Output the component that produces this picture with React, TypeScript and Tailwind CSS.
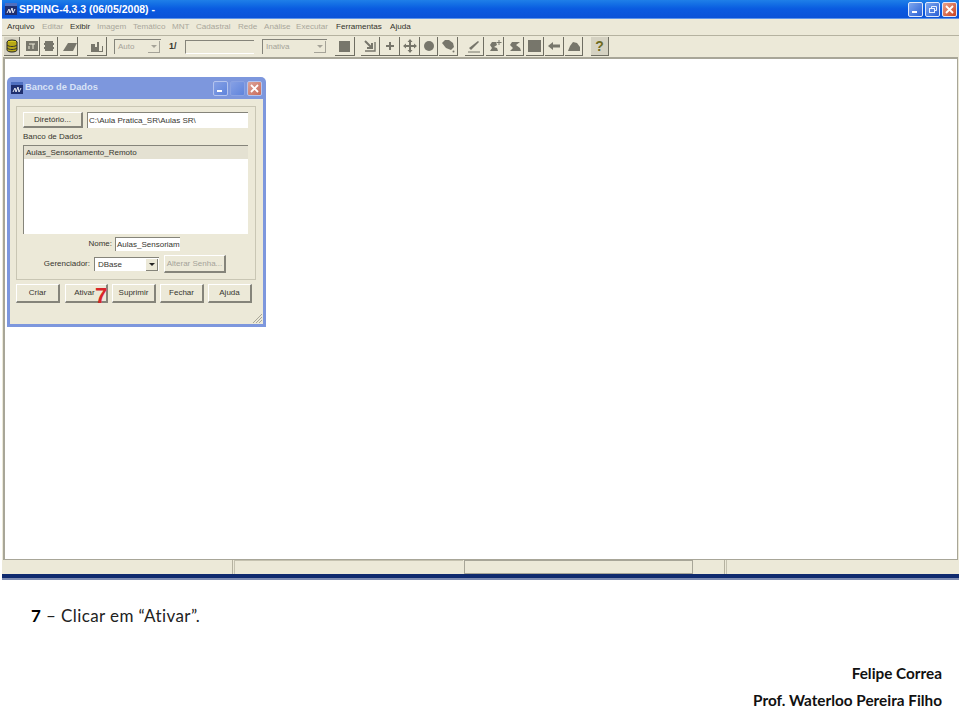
import React from "react";

const ui = "font-['Liberation_Sans',Arial,sans-serif]";
const Ic = ({ children, w = 14 }: { children: React.ReactNode; w?: number }) => (
  <svg width={w} height={14} viewBox="0 0 14 14" className="block">{children}</svg>
);
const G = "#77766b";

const ToolBtn = ({ w, className = "", children }: { w: string; className?: string; children: React.ReactNode }) => (
  <div className={`h-[19px] flex items-center justify-center border-r border-b border-[#6f6e62] ${w} ${className}`}>{children}</div>
);

const Xp = ({ kind, active }: { kind: "min" | "max" | "close"; active: boolean }) => {
  const bg = kind === "close"
    ? active ? "bg-gradient-to-br from-[#e8a08a] to-[#c8401c]" : "bg-gradient-to-br from-[#dba49a] to-[#c96a58]"
    : active ? "bg-gradient-to-br from-[#7ea6ee] to-[#2a5fd4]" : "bg-gradient-to-br from-[#86a0e4] to-[#5f84dc]";
  const bd = active ? "border border-[#dfe8fa]" : kind === "max" ? "border border-[#8aa2e2]" : "border border-[#b4c4ee]";
  return (
    <div className={`w-[15px] h-[15px] rounded-[2px] ${bd} ${bg} flex items-center justify-center`}>
      <svg width="11" height="11" viewBox="0 0 11 11">
        {kind === "min" && <rect x="2" y="7" width="5" height="2" fill="#fff" />}
        {kind === "max" && active && <g fill="none" stroke="#e8f0ff"><rect x="2.5" y="4.5" width="5" height="4" /><path d="M4.5 4V2.500h5v4H8" /></g>}
        {kind === "close" && <path d="M2 2l7 7M9 2l-7 7" stroke="#fff" strokeWidth="1.8" />}
      </svg>
    </div>
  );
};

const SpringIcon = () => (
  <svg width="12" height="12" viewBox="0 0 12 12" className="block">
    <rect width="12" height="12" fill="#1f2f70" />
    <rect x="0" y="0" width="12" height="3" fill="#4f6fc0" />
    <path d="M2 10l2-4 1 4 2-5 1 5 2-4" stroke="#e8ecf6" strokeWidth="1" fill="none" />
  </svg>
);

const DlgButton = ({ w, children, disabled }: { w: string; children: React.ReactNode; disabled?: boolean }) => (
  <div className={`${w} h-full whitespace-nowrap flex items-center justify-center bg-[#ece9d8] border-t border-l border-t-white border-l-white border-r-2 border-b-2 border-r-[#85847a] border-b-[#85847a] ${disabled ? "text-[#a5a398]" : "text-[#37362f]"}`}>{children}</div>
);

const Sunken = ({ className = "", children }: { className?: string; children?: React.ReactNode }) => (
  <div className={`bg-white border-t border-l border-t-[#85847a] border-l-[#85847a] ${className}`}>{children}</div>
);

const Arrow = ({ off }: { off?: boolean }) => (
  <div className={`w-[12px] h-[12px] bg-[#ece9d8] border-r border-b ${off ? "border-[#a5a398]" : "border-[#85847a]"} flex items-center justify-center`}>
    <div className={`w-0 h-0 border-l-[3px] border-r-[3px] border-t-[3px] border-l-transparent border-r-transparent ${off ? "border-t-[#a5a398]" : "border-t-[#222]"}`} />
  </div>
);

export default function App() {
  const menu: [string, boolean, string][] = [
    ["Arquivo", true, "w-[35px]"], ["Editar", false, "w-[28px]"], ["Exibir", true, "w-[27px]"], ["Imagem", false, "w-[36px]"],
    ["Temático", false, "w-[39px]"], ["MNT", false, "w-[24px]"], ["Cadastral", false, "w-[42px]"], ["Rede", false, "w-[26px]"],
    ["Análise", false, "w-[32px]"], ["Executar", false, "w-[40px]"], ["Ferramentas", true, "w-[54px]"], ["Ajuda", true, "w-[24px]"],
  ];
  return (
    <div className={`w-[960px] h-[707px] overflow-hidden bg-white ${ui}`}>
      <div className="ml-[2px] w-[957px] h-[580px] flex flex-col bg-[#ece9d8]">
        {/* Title bar */}
        <div className="h-[19px] shrink-0 flex items-center pl-[3px] pr-[2px] bg-gradient-to-b from-[#1f7fe8] via-[#0a5ae0] to-[#0a52d8] border-b border-[#5c93ea]">
          <SpringIcon />
          <span className="ml-[2px] text-white font-bold text-[10.5px] leading-none">SPRING-4.3.3 (06/05/2008) -</span>
          <div className="ml-auto flex gap-[2px]"><Xp kind="min" active /><Xp kind="max" active /><Xp kind="close" active /></div>
        </div>
        {/* Menu */}
        <div className="h-[17px] shrink-0 flex items-center pl-[5px] border-b border-[#b5b2a0] text-[8.100px] leading-none">
          {menu.map(([t, on, m]) => (
            <span key={t} className={`${m} shrink-0 ${on ? "text-[#33332c]" : "text-[#a9a79b]"}`}>{t}</span>
          ))}
        </div>
        {/* Toolbar */}
        <div className="h-[21px] shrink-0 flex items-center pl-[2px] text-[8px]">
          <ToolBtn w="w-[16px]" className="bg-[#d5d2c2]"><Ic><ellipse cx="7" cy="3" rx="5" ry="2" fill="#d8c820" stroke="#222" /><path d="M2 3v8c0 1 2 2 5 2s5-1 5-2V3" fill="#b8a818" stroke="#222" /><path d="M2 6c2 2 8 2 10 0M2 9c2 2 8 2 10 0" stroke="#333" fill="none" /></Ic></ToolBtn>
          <ToolBtn w="w-[16px]" className="ml-[4px]"><Ic><rect x="1" y="2" width="12" height="10" fill={G} /><path d="M4 5h6M8 5v5M4 7v3" stroke="#ece9d8" fill="none" /></Ic></ToolBtn>
          <ToolBtn w="w-[17px]" className="ml-[1px]"><Ic><path d="M3 2h8v2h1v2h-1v2h1v2h-1v2H3v-2H2V8h1V6H2V4h1z" fill={G} /></Ic></ToolBtn>
          <ToolBtn w="w-[18px]" className="ml-[2px]"><Ic w={16}><path d="M1 12L6 4h9l-4 8z" fill={G} /></Ic></ToolBtn>
          <ToolBtn w="w-[20px]" className="ml-[9px]"><Ic><path d="M2 5h3v3h2V3h2v9h3V7h1v6H1V5z" fill={G} /></Ic></ToolBtn>
          {/* Auto combo */}
          <div className="ml-[7px] w-[47px] h-[15px] bg-[#ece9d8] border-t border-l border-[#85847a] flex items-center justify-between pl-[3px] pr-[1px] text-[#a5a398]">
            <span>Auto</span><Arrow off />
          </div>
          <span className="ml-[8px] font-bold text-[#37362f] w-[17px] text-[9px]">1/</span>
          <div className="-ml-[1px] w-[69px] h-[14px] border-t border-l border-[#85847a] border-b border-b-white" />
          <div className="ml-[8px] w-[65px] h-[15px] bg-[#ece9d8] border-t border-l border-[#85847a] flex items-center justify-between pl-[3px] pr-[1px] text-[#a5a398]">
            <span>Inativa</span><Arrow off />
          </div>
          <ToolBtn w="w-[20px]" className="ml-[8px]"><div className="w-[11px] h-[11px] bg-[#77766b]" /></ToolBtn>
          <ToolBtn w="w-[19px]" className="ml-[6px]"><Ic><path d="M2 2l7 7M9 4v5H4" stroke={G} strokeWidth="2" fill="none" /><path d="M2 12h10V3" stroke={G} strokeWidth="1.4" fill="none" /></Ic></ToolBtn>
          <ToolBtn w="w-[20px]"><Ic><path d="M7 3v8M3 7h8" stroke={G} strokeWidth="2" /></Ic></ToolBtn>
          <ToolBtn w="w-[20px]"><Ic><path d="M7 1v12M1 7h12" stroke={G} strokeWidth="2" /><path d="M7 0l2.500 3h-5zM7 14l2.500-3h-5zM0 7l3-2.500v5zM14 7l-3-2.500v5z" fill={G} /></Ic></ToolBtn>
          <ToolBtn w="w-[18px]"><div className="w-[10px] h-[10px] rounded-full bg-[#77766b]" /></ToolBtn>
          <ToolBtn w="w-[19px]" className="ml-[1px]"><Ic><path d="M1 4l3-3h4l4 3 1 4-3 3-5-2z" fill={G} /><circle cx="12.5" cy="12.5" r="1" fill={G} /></Ic></ToolBtn>
          <ToolBtn w="w-[19px]" className="ml-[7px]"><Ic><path d="M2 9L11 2l1 1-8 8z" fill={G} /><path d="M1 13h12" stroke={G} /></Ic></ToolBtn>
          <ToolBtn w="w-[18px]" className="ml-[2px]"><Ic><path d="M2 6l2-3h4l1 3-3 2 3 1 1 3H2l2-3z" fill={G} /><path d="M11 1v5M8.500 3.500h5" stroke={G} /></Ic></ToolBtn>
          <ToolBtn w="w-[18px]" className="ml-[2px]"><Ic><path d="M2 6l2-3h8L8 6l4 3 1 3H2l3-3z" fill={G} /></Ic></ToolBtn>
          <ToolBtn w="w-[18px]" className="ml-[2px]"><div className="w-[13px] h-[12px] bg-[#77766b]" /></ToolBtn>
          <ToolBtn w="w-[19px]" className="ml-[1px]"><Ic><path d="M1 7l5-4v2.500h7v3H6V11z" fill={G} /></Ic></ToolBtn>
          <ToolBtn w="w-[18px]" className="ml-[1px]"><Ic><path d="M1 12l2-5 3-4 4 1 3 4v4z" fill={G} /></Ic></ToolBtn>
          <ToolBtn w="w-[18px]" className="ml-[8px] bg-[#d5d2c2]"><span className="font-bold text-[14px] leading-none text-[#6d6a20]">?</span></ToolBtn>
        </div>
        {/* Canvas */}
        <div className="flex-1 min-h-0 ml-[1px] mr-[1px] bg-white border-t-2 border-l-2 border-[#a8a698] border-r border-b pt-[18px] pl-[2px]">
          {/* Dialog window */}
          <div className="relative w-[259px] h-[250px] flex flex-col rounded-t-[5px] bg-[#7d97dd] px-[3px] pb-[3px] text-[8px] text-[#37362f]">
            <div className="h-[22px] shrink-0 flex items-center pl-[1px] pr-[1px]">
              <SpringIcon />
              <span className="ml-[2px] text-[#d8e2f6] font-bold text-[9.300px]">Banco de Dados</span>
              <div className="ml-auto flex gap-[2px]"><Xp kind="min" active={false} /><Xp kind="max" active={false} /><Xp kind="close" active={false} /></div>
            </div>
            <div className="flex-1 bg-[#ece9d8] px-[6px] pt-[7px] flex flex-col">
              {/* Group */}
              <div className="w-[240px] h-[174px] shrink-0 border border-[#c9c6b4] px-[6px] pt-[5px] flex flex-col">
                <div className="flex h-[16px] gap-[4px] shrink-0">
                  <DlgButton w="w-[60px]">Diretório...</DlgButton>
                  <Sunken className="w-[161px] pl-[1px] flex items-center">C:\Aula Pratica_SR\Aulas SR\</Sunken>
                </div>
                <div className="mt-[2px] h-[13px] flex items-center">Banco de Dados</div>
                <Sunken className="mt-[2px] w-[225px] h-[89px] shrink-0">
                  <div className="h-[13px] bg-[#e4e1d2] flex items-center pl-[2px]">Aulas_Sensoriamento_Remoto</div>
                </Sunken>
                <div className="mt-[3px] flex items-center h-[14px] shrink-0">
                  <span className="w-[89px] text-right">Nome:</span>
                  <Sunken className="ml-[3px] w-[65px] h-[14px] flex items-center pl-[1px] overflow-hidden whitespace-nowrap">Aulas_Sensoriam</Sunken>
                </div>
                <div className="mt-[4px] flex items-center h-[18px] shrink-0">
                  <span className="w-[67px] text-right">Gerenciador:</span>
                  <Sunken className="ml-[4px] w-[65px] h-[14px] flex items-center justify-between pl-[3px] pr-[1px]"><span>DBase</span><Arrow /></Sunken>
                  <div className="ml-[5px] h-[18px]"><DlgButton w="w-[62px]" disabled>Alterar Senha...</DlgButton></div>
                </div>
              </div>
              {/* Buttons */}
              <div className="mt-[4px] flex gap-[4px] h-[19px] shrink-0">
                <DlgButton w="w-[44px]">Criar</DlgButton>
                <div className="relative h-full ml-[1px]">
                  <DlgButton w="w-[43px]"><span className="mr-[3px]">Ativar</span></DlgButton>
                  <span className="absolute left-[30px] top-[1px] font-bold text-[22px] leading-none text-[#d8262a]">7</span>
                </div>
                <DlgButton w="w-[44px]">Suprimir</DlgButton>
                <DlgButton w="w-[44px]">Fechar</DlgButton>
                <DlgButton w="w-[44px]">Ajuda</DlgButton>
              </div>
            </div>
            <svg width="12" height="12" viewBox="0 0 12 12" className="absolute right-[3px] bottom-[3px]">
              <path d="M11 2L2 11M11 5L5 11M11 8L8 11" stroke="#a8a698" />
            </svg>
          </div>
        </div>
        {/* Status bar */}
        <div className="h-[14px] shrink-0 flex">
          <div className="w-[231px] border-r border-[#b5b2a0]" />
          <div className="w-[229px] ml-[1px] border-l border-t border-[#c5c2b0]" />
          <div className="w-[229px] ml-[1px] border border-[#a8a698]" />
          <div className="w-[31px] ml-[1px] border-r border-[#b5b2a0]" />
          <div className="flex-1 ml-[1px] border-l border-[#c5c2b0]" />
        </div>
        <div className="h-[6px] shrink-0 bg-[#0f2a6e] border-b-2 border-[#7d8bb0]" />
      </div>
      {/* Caption */}
      <div className="mt-[26px] pl-[31px] h-[18px] flex items-center font-['Lato',sans-serif] text-[17px] tracking-[0.4px] leading-none text-[#222]">
        <span><b className="text-black">7</b> – Clicar em “Ativar”.</span>
      </div>
      <div className="mt-[42px] pr-[18px] flex flex-col items-end gap-[13px] font-['Lato',sans-serif] font-bold text-[15.300px] text-[#111] leading-[14px] whitespace-nowrap">
        <div>Felipe Correa</div>
        <div>Prof. Waterloo Pereira Filho</div>
      </div>
    </div>
  );
}
